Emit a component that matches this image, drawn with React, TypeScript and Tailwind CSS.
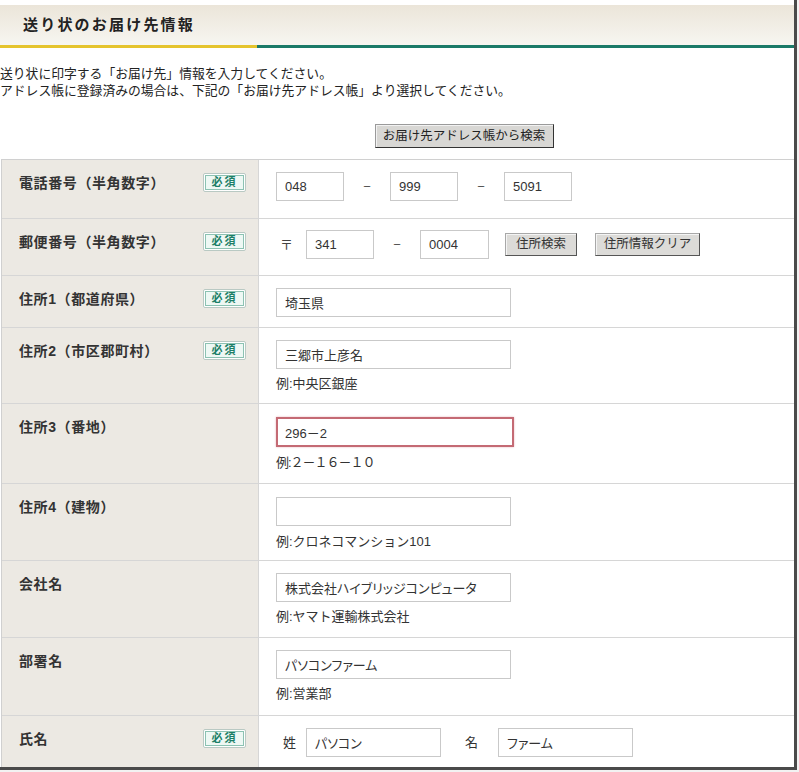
import React from 'react';

const font = "font-['Liberation_Sans','Noto_Sans_CJK_JP',sans-serif]";

type RowProps = {
  label: string;
  required?: boolean;
  height: string;
  children: React.ReactNode;
};

function Badge() {
  return (
    <span className="inline-flex h-[19px] w-[43px] items-center justify-center rounded-[2px] border border-[#b9c9c3] bg-white p-[1px]">
      <span className="flex h-full w-full items-center justify-center border border-[#8cc2b2] bg-[#eef8f4] text-[11px] font-bold tracking-[2px] text-[#1d7f67]">
        必須
      </span>
    </span>
  );
}

function Row({ label, required, height, children }: RowProps) {
  return (
    <div className={`flex border-b border-[#d6d6d6] ${height}`}>
      <div className="flex w-[257px] shrink-0 items-start justify-between border-r border-[#d6d6d6] bg-[#ece9e3] pl-[17px] pr-[12px] pt-[13px]">
        <span className="text-[14px] font-bold leading-[20px] tracking-[0.6px] text-[#333]">{label}</span>
        {required && <Badge />}
      </div>
      <div className="flex-1 bg-white pl-[17px] pt-[12px]">{children}</div>
    </div>
  );
}

function Field({ value, width, className = '' }: { value: string; width: string; className?: string }) {
  return (
    <input
      readOnly
      value={value}
      className={`h-[29px] border border-[#c9c9c9] bg-white px-[8px] text-[13px] text-[#333] outline-none [font-feature-settings:'palt'] ${width} ${className}`}
    />
  );
}

function Example({ text, mt = 'mt-[6px]', className = '' }: { text: string; mt?: string; className?: string }) {
  return <div className={`${mt} text-[13px] leading-[18px] text-[#333] ${className}`}>{text}</div>;
}

function GrayButton({ label, width }: { label: string; width: string }) {
  return (
    <button className={`h-[23px] ${width} border border-t-[#a8a8a8] border-l-[#a8a8a8] border-r-[#555] border-b-[#555] bg-[#dcdbd8] text-[12.5px] leading-none text-[#333] shadow-[inset_1px_1px_0_#f4f4f4]`}>
      {label}
    </button>
  );
}

function Dash() {
  return <span className="w-[46px] text-center text-[13px] text-[#555]">−</span>;
}

export default function App() {
  return (
    <div className={`h-[772px] w-[799px] overflow-hidden bg-[#f2f2f2] ${font}`}>
      <div className="h-[770px] w-[797px] overflow-hidden border-b-[3px] border-r-[3px] border-[#4a4a4a] bg-white">
        <div className="mt-[5px] flex h-[40px] items-center bg-gradient-to-b from-[#ebe5d9] to-[#f7f6f1] pl-[23px]">
          <h1 className="text-[15px] font-bold tracking-[2.2px] text-[#222]">送り状のお届け先情報</h1>
        </div>
        <div className="flex h-[3px]">
          <div className="w-[257px] bg-[#e5c42e]" />
          <div className="flex-1 bg-[#1b7a68]" />
        </div>

        <div className="mt-[17px] text-[12.8px] leading-[17px] text-[#222]">
          <p>送り状に印字する「お届け先」情報を入力してください。</p>
          <p>アドレス帳に登録済みの場合は、下記の「お届け先アドレス帳」より選択してください。</p>
        </div>

        <div className="mt-[25px] flex justify-center pl-[134px]">
          <button className="h-[24px] w-[179px] border border-t-[#9a9a9a] border-l-[#9a9a9a] border-r-[#333] border-b-[#333] bg-[#d8d7d4] text-[12.5px] leading-none text-[#222] shadow-[inset_1px_1px_0_#f2f2f2]">
            お届け先アドレス帳から検索
          </button>
        </div>

        <div className="ml-[1px] mt-[11px] border-l border-t border-[#d0d0d0]">
          <Row label="電話番号（半角数字）" required height="h-[59px]">
            <div className="flex items-center">
              <Field value="048" width="w-[68px]" />
              <Dash />
              <Field value="999" width="w-[68px]" />
              <Dash />
              <Field value="5091" width="w-[68px]" />
            </div>
          </Row>
          <Row label="郵便番号（半角数字）" required height="h-[57px]">
            <div className="-mt-[1px] flex items-center">
              <span className="w-[30px] pl-[4px] text-[13px] text-[#444]">〒</span>
              <Field value="341" width="w-[68px]" />
              <Dash />
              <Field value="0004" width="w-[69px]" />
              <span className="w-[16px]" />
              <GrayButton label="住所検索" width="w-[72px]" />
              <span className="w-[18px]" />
              <GrayButton label="住所情報クリア" width="w-[105px]" />
            </div>
          </Row>
          <Row label="住所1（都道府県）" required height="h-[52px]">
            <Field value="埼玉県" width="w-[235px]" />
          </Row>
          <Row label="住所2（市区郡町村）" required height="h-[76px]">
            <Field value="三郷市上彦名" width="w-[235px]" />
            <Example text="例:中央区銀座" />
          </Row>
          <Row label="住所3（番地）" height="h-[80px]">
            <div className="pt-[1px]">
              <input
                readOnly
                value="296－2"
                className="h-[30px] w-[238px] border-2 border-[#c46a74] bg-white px-[7px] text-[13px] text-[#333] outline-none shadow-[0_0_2px_#e8b8be]"
              />
              <Example text="例:２－１６－１０" mt="mt-[7px]" className="tracking-[-1px]" />
            </div>
          </Row>
          <Row label="住所4（建物）" height="h-[77px]">
            <div className="pt-[1px]">
              <Field value="" width="w-[235px]" />
              <Example text="例:クロネコマンション101" mt="mt-[7px]" />
            </div>
          </Row>
          <Row label="会社名" height="h-[77px]">
            <Field value="株式会社ハイブリッジコンピュータ" width="w-[235px]" />
            <Example text="例:ヤマト運輸株式会社" />
          </Row>
          <Row label="部署名" height="h-[78px]">
            <Field value="パソコンファーム" width="w-[235px]" />
            <Example text="例:営業部" />
          </Row>
          <Row label="氏名" required height="h-[53px]">
            <div className="flex items-center">
              <span className="w-[30px] pl-[7px] text-[13px] text-[#333]">姓</span>
              <Field value="パソコン" width="w-[135px]" />
              <span className="w-[57px] pl-[24px] text-[13px] text-[#333]">名</span>
              <Field value="ファーム" width="w-[135px]" />
            </div>
          </Row>
        </div>
      </div>
    </div>
  );
}
